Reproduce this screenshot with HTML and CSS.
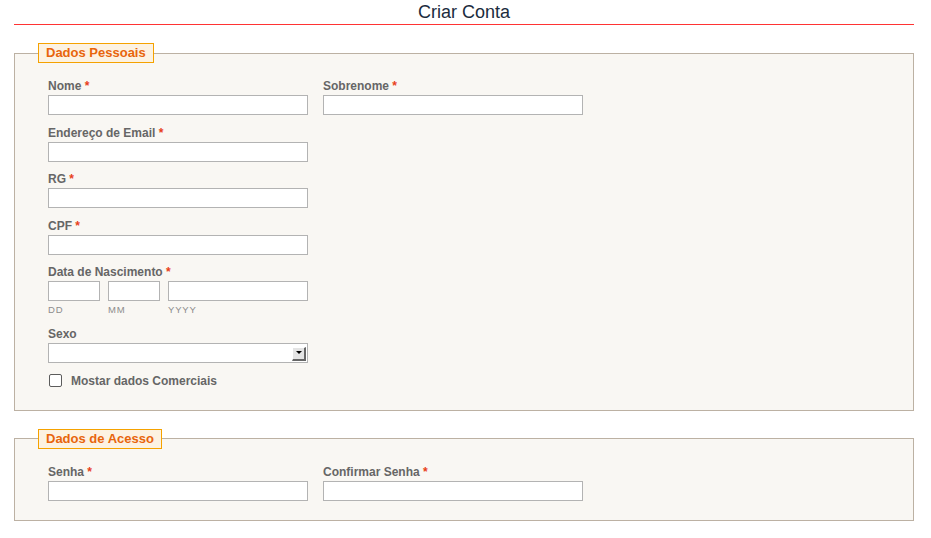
FILE: index.html
```html
<!DOCTYPE html>
<html lang="pt">
<head>
<meta charset="utf-8">
<title>Criar Conta</title>
<link rel="stylesheet" href="styles.css">
</head>
<body>
<div class="page">
  <h1 class="title">Criar Conta</h1>

  <fieldset class="group">
    <legend class="group-legend">Dados Pessoais</legend>
    <div class="group-body">
      <div class="row">
        <div class="field">
          <label class="label">Nome <span class="req">*</span></label>
          <input class="input" type="text">
        </div>
        <div class="field">
          <label class="label">Sobrenome <span class="req">*</span></label>
          <input class="input" type="text">
        </div>
      </div>
      <div class="row">
        <div class="field">
          <label class="label">Endereço de Email <span class="req">*</span></label>
          <input class="input" type="text">
        </div>
      </div>
      <div class="row">
        <div class="field">
          <label class="label">RG <span class="req">*</span></label>
          <input class="input" type="text">
        </div>
      </div>
      <div class="row">
        <div class="field">
          <label class="label">CPF <span class="req">*</span></label>
          <input class="input" type="text">
        </div>
      </div>
      <div class="row">
        <div class="field">
          <label class="label">Data de Nascimento <span class="req">*</span></label>
          <div class="date">
            <div class="date-part date-short">
              <input class="input" type="text">
              <span class="sublabel">DD</span>
            </div>
            <div class="date-part date-short">
              <input class="input" type="text">
              <span class="sublabel">MM</span>
            </div>
            <div class="date-part date-long">
              <input class="input" type="text">
              <span class="sublabel">YYYY</span>
            </div>
          </div>
        </div>
      </div>
      <div class="row row-after-date">
        <div class="field">
          <label class="label">Sexo</label>
          <div class="select-wrap">
            <select class="select"><option></option></select>
            <span class="select-btn"><span class="select-tri"></span></span>
          </div>
        </div>
      </div>
      <div class="row row-check">
        <label class="check">
          <input class="checkbox" type="checkbox">
          <span class="check-text">Mostar dados Comerciais</span>
        </label>
      </div>
    </div>
  </fieldset>

  <fieldset class="group group-access">
    <legend class="group-legend">Dados de Acesso</legend>
    <div class="group-body">
      <div class="row">
        <div class="field">
          <label class="label">Senha <span class="req">*</span></label>
          <input class="input" type="password">
        </div>
        <div class="field">
          <label class="label">Confirmar Senha <span class="req">*</span></label>
          <input class="input" type="password">
        </div>
      </div>
    </div>
  </fieldset>
</div>
</body>
</html>
```

FILE: styles.css
```css
html, body {
  margin: 0;
  padding: 0;
  background: #ffffff;
}

body {
  font-family: "Liberation Sans", Arial, sans-serif;
  color: #666666;
}

.page {
  width: 900px;
  margin-left: 14px;
}

.title {
  margin: 0;
  padding-top: 1px;
  height: 23px;
  line-height: 23px;
  font-size: 18px;
  font-weight: normal;
  color: #1b2c3d;
  text-align: center;
  border-bottom: 1px solid #ff3333;
}

.group {
  margin: 18px 0 0;
  padding: 16px 0 21px 23px;
  border: 1px solid #bcb1a3;
  background: #f9f7f3;
  min-width: 0;
}

.group-access {
  padding-bottom: 19px;
}

.group-legend {
  padding: 0 7px;
  height: 18px;
  line-height: 18px;
  border: 1px solid #f5a200;
  background: #fcf2e2;
  color: #e8650c;
  font-size: 13px;
  font-weight: bold;
}

.group-body {
  display: flex;
  flex-direction: column;
  gap: 10.5px;
  padding-left: 10px;
}

.row {
  display: flex;
  gap: 15px;
}

.row-after-date {
  margin-top: 1px;
}

.row-check {
  margin-top: -0.5px;
}

.field {
  width: 260px;
  display: flex;
  flex-direction: column;
}

.label {
  display: block;
  font-size: 12px;
  line-height: 14px;
  font-weight: bold;
  color: #666666;
  margin-bottom: 2px;
}

.req {
  color: #e8401a;
}

.input {
  box-sizing: border-box;
  display: block;
  width: 100%;
  height: 20px;
  margin: 0;
  padding: 0 3px;
  border: 1px solid #b3b3b3;
  border-radius: 0;
  background: #ffffff;
  font-family: inherit;
  font-size: 12px;
  outline: none;
}

.date {
  display: flex;
  gap: 8px;
}

.date-part {
  display: flex;
  flex-direction: column;
}

.date-short {
  width: 52px;
}

.date-long {
  width: 140px;
}

.sublabel {
  margin-top: 3px;
  font-size: 9.5px;
  line-height: 11px;
  letter-spacing: 0.8px;
  color: #8c8c8c;
}

.select-wrap {
  position: relative;
  width: 260px;
  height: 20px;
}

.select {
  box-sizing: border-box;
  display: block;
  width: 100%;
  height: 20px;
  margin: 0;
  padding: 0 3px;
  border: 1px solid #b3b3b3;
  border-radius: 0;
  background: #ffffff;
  -webkit-appearance: none;
  appearance: none;
  font-family: inherit;
  font-size: 12px;
  outline: none;
}

.select-btn {
  position: absolute;
  top: 4px;
  right: 2px;
  box-sizing: border-box;
  width: 14px;
  height: 14px;
  background: #e4e4e4;
  border-top: 1px solid #ffffff;
  border-left: 1px solid #ffffff;
  border-right: 2px solid #666666;
  border-bottom: 2px solid #666666;
  display: flex;
  justify-content: center;
  padding-top: 3px;
}

.select-tri {
  width: 0;
  height: 0;
  border-left: 3px solid transparent;
  border-right: 3px solid transparent;
  border-top: 3px solid #000000;
}

.check {
  display: flex;
  align-items: center;
  height: 16px;
  padding-left: 1px;
  gap: 9px;
}

.checkbox {
  -webkit-appearance: none;
  appearance: none;
  box-sizing: border-box;
  width: 13px;
  height: 13px;
  margin: 0;
  border: 1px solid #5c5c5c;
  border-radius: 2px;
  background: #ffffff;
}

.check-text {
  font-size: 12px;
  font-weight: bold;
  color: #666666;
  line-height: 16px;
}
```
